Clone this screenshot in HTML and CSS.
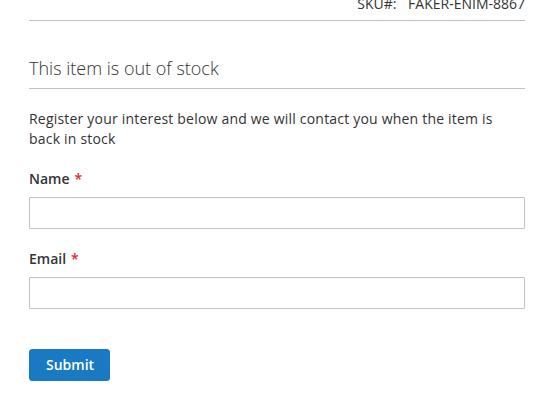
FILE: index.html
```html
<!DOCTYPE html>
<html lang="en">
<head>
<meta charset="utf-8">
<title>Out of stock</title>
<link rel="stylesheet" href="styles.css">
</head>
<body>
<div class="page">
  <div class="sku-row">
    <span class="sku-label">SKU#:</span>
    <span class="sku-value">FAKER-ENIM-8867</span>
  </div>
  <h2 class="title">This item is out of stock</h2>
  <p class="intro">Register your interest below and we will contact you when the item is back in stock</p>
  <form class="form">
    <div class="field">
      <label class="label">Name<span class="req">*</span></label>
      <input class="input" type="text">
    </div>
    <div class="field">
      <label class="label">Email<span class="req">*</span></label>
      <input class="input" type="email">
    </div>
    <div class="actions">
      <button class="btn" type="button">Submit</button>
    </div>
  </form>
</div>
</body>
</html>
```
FILE: styles.css
```css
html, body {
  margin: 0;
  padding: 0;
  background: #fff;
}
body {
  font-family: "Open Sans", "Liberation Sans", sans-serif;
  font-size: 14px;
  line-height: 20px;
  color: #333;
}
.page {
  padding: 0 31px 0 29px;
}
.sku-row {
  margin-top: -6px;
  padding-bottom: 6px;
  border-bottom: 1px solid #c1c1c1;
  text-align: right;
  color: #333;
}
.sku-label {
  margin-right: 8px;
}
.title {
  margin: 37px 0 0;
  padding-bottom: 10px;
  font-size: 18px;
  font-weight: 300;
  line-height: 20px;
  color: #333;
  border-bottom: 1px solid #c1c1c1;
}
.intro {
  margin: 20px 0 0;
  letter-spacing: 0.2px;
}
.form {
  margin-top: 20px;
}
.field {
  display: flex;
  flex-direction: column;
  gap: 8px;
  margin-bottom: 20px;
}
.label {
  font-weight: 600;
}
.req {
  color: #e02b27;
  margin-left: 5px;
  font-size: 14px;
}
.input {
  box-sizing: border-box;
  width: 100%;
  height: 32px;
  margin: 0;
  border: 1px solid #c2c2c2;
  border-radius: 1px;
  background: #fff;
  font: inherit;
  padding: 0 9px;
}
.actions {
  padding-top: 20px;
}
.btn {
  height: 32px;
  padding: 0 15px 0 16px;
  border: 1px solid #1979c3;
  border-radius: 3px;
  background: #1979c3;
  color: #fff;
  font-family: "Open Sans", "Liberation Sans", sans-serif;
  font-size: 14px;
  font-weight: 600;
  line-height: 20px;
}
```
